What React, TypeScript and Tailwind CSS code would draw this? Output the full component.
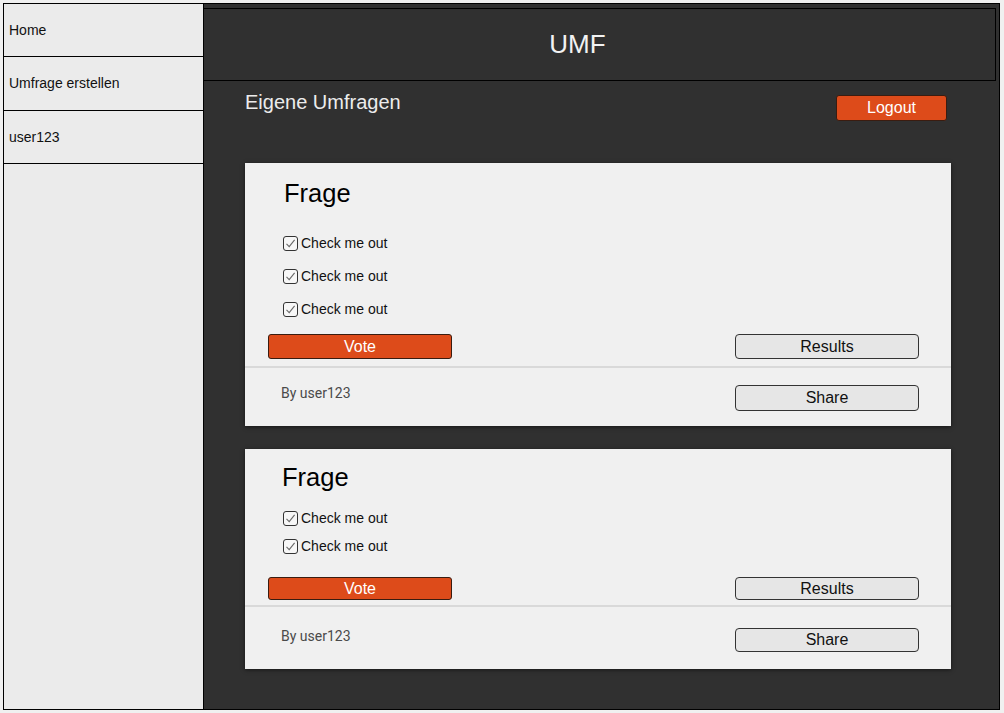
import React from "react";

type Poll = {
  padTop: string;
  padLeft: string;
  optionsTop: string;
  optionGap: string;
  options: string[];
  buttonsTop: string;
  btnH: string;
  shareH: string;
  dividerTop: string;
  footer: string;
};

const polls: Poll[] = [
  {
    padTop: "pt-[15px]",
    padLeft: "pl-[39px]",
    optionsTop: "mt-[25px]",
    optionGap: "gap-[13px]",
    options: ["Check me out", "Check me out", "Check me out"],
    buttonsTop: "mt-[15px]",
    btnH: "h-[25px]",
    shareH: "h-[26px]",
    dividerTop: "mt-[7px]",
    footer: "h-[58px] pt-[17px]",
  },
  {
    padTop: "pt-[13px]",
    padLeft: "pl-[37px]",
    optionsTop: "mt-[16px]",
    optionGap: "gap-[8px]",
    options: ["Check me out", "Check me out"],
    buttonsTop: "mt-[21px]",
    btnH: "h-[23px]",
    shareH: "h-[24px]",
    dividerTop: "mt-[5px]",
    footer: "h-[62px] pt-[21px]",
  },
];

function CheckBox() {
  return (
    <span className="flex h-[15px] w-[15px] items-center justify-center rounded-[3px] border border-[#333] bg-[#f7f7f7]">
      <svg width="11" height="11" viewBox="0 0 11 11" fill="none">
        <path d="M1.5 5.8 L4.2 8.6 L9.6 1.8" stroke="#6a6a6a" strokeWidth="1.1" />
      </svg>
    </span>
  );
}

function PollCard({ poll }: { poll: Poll }) {
  return (
    <div className="w-[706px] bg-[#f0f0f0] shadow-[0_1px_4px_rgba(0,0,0,0.55)]">
      <div className={`${poll.padTop} ${poll.padLeft}`}>
        <div className="text-[25.5px] leading-[30px] text-black">Frage</div>
      </div>
      <div className={`${poll.optionsTop} flex flex-col ${poll.optionGap} pl-[38px]`}>
        {poll.options.map((o, i) => (
          <label key={i} className="flex h-[20px] items-center gap-[3px] text-[14px] text-[#111]">
            <CheckBox />
            {o}
          </label>
        ))}
      </div>
      <div className={`${poll.buttonsTop} flex justify-between pl-[23px] pr-[32px]`}>
        <button className={`${poll.btnH} w-[184px] rounded-[3px] border border-[#3a1c10] bg-[#dd4b1a] text-[16px] leading-none text-white`}>
          Vote
        </button>
        <button className={`${poll.btnH} w-[184px] rounded-[4px] border border-[#333] bg-[#e6e6e6] text-[16px] leading-none text-[#111]`}>
          Results
        </button>
      </div>
      <div className={`${poll.dividerTop} h-[2px] bg-[#d9d9d9]`} />
      <div className={`${poll.footer} flex items-start justify-between pl-[36px] pr-[32px]`}>
        <span className="font-['Roboto',sans-serif] text-[14px] leading-[16px] text-[#4a4a4a]">By user123</span>
        <button className={`${poll.shareH} w-[184px] rounded-[4px] border border-[#333] bg-[#e6e6e6] text-[16px] leading-none text-[#111]`}>
          Share
        </button>
      </div>
    </div>
  );
}

export default function App() {
  const nav = [
    { label: "Home", h: "h-[53px]" },
    { label: "Umfrage erstellen", h: "h-[54px]" },
    { label: "user123", h: "h-[53px]" },
  ];
  return (
    <div className="min-h-[713px] bg-[#f0f0f0] p-[3px] font-['Liberation_Sans',Arial,sans-serif]">
      <div className="flex h-[707px] w-[997px] border border-black">
        {/* Sidebar */}
        <aside className="w-[200px] shrink-0 border-r border-black bg-[#ebebeb]">
          {nav.map((n) => (
            <div key={n.label} className={`flex ${n.h} items-center border-b border-black pl-[5px] text-[14px] text-[#111]`}>
              {n.label}
            </div>
          ))}
        </aside>

        {/* Main */}
        <main className="flex-1 bg-[#303030]">
          <header className="mt-[4px] mr-[3px] flex h-[73px] items-center justify-center border border-l-0 border-black pr-[44px]">
            <span className="text-[26px] text-[#f2f2f2]">UMF</span>
          </header>

          <div className="flex w-[706px] items-start justify-between ml-[41px]">
            <h2 className="mt-[10px] text-[20px] leading-[23px] text-[#ececec]">Eigene Umfragen</h2>
            <button className="mt-[14px] mr-[4px] h-[26px] w-[111px] rounded-[3px] border border-[#3a1c10] bg-[#dd4b1a] text-[16px] leading-none text-white">
              Logout
            </button>
          </div>

          <div className="ml-[41px] mt-[42px] flex flex-col gap-[23px]">
            {polls.map((p, i) => (
              <PollCard key={i} poll={p} />
            ))}
          </div>
        </main>
      </div>
    </div>
  );
}
